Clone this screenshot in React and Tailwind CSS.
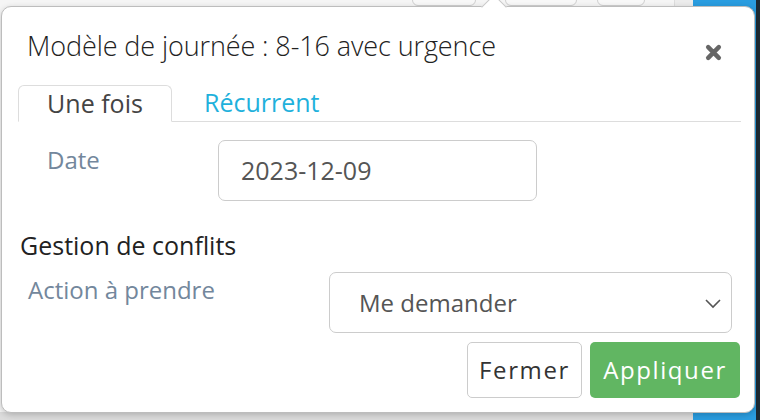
import React from "react";

const App = () => {
  return (
    <div
      className="relative w-[760px] h-[420px] overflow-hidden bg-[#f5f5f5]"
      style={{ fontFamily: "'Open Sans', 'Liberation Sans', sans-serif" }}
    >
      {/* Background page bits */}
      <div className="absolute left-[412px] top-[-10px] w-[64px] h-[16px] rounded-md border border-[#cfcfcf] bg-[#f8f8f8]" />
      <div className="absolute left-[505px] top-[-10px] w-[72px] h-[16px] rounded-md border border-[#cfcfcf] bg-[#f8f8f8]" />
      <div className="absolute left-[597px] top-[-10px] w-[48px] h-[16px] rounded-md border border-[#cfcfcf] bg-[#f8f8f8]" />
      <div className="absolute left-[674px] top-0 w-[20px] h-[420px] bg-[#ececec] border-l border-[#dddddd]" />
      <div className="absolute left-[693px] top-0 w-[67px] h-[420px] bg-[#2a9de0]" />
      <div className="absolute left-[756px] top-0 w-[4px] h-[420px] bg-[#1d2a33]" />
      <div className="absolute left-0 bottom-0 w-[693px] h-[8px] bg-[#dcdcdc]" />

      {/* Popover */}
      <div className="absolute left-[1px] top-[6px] w-[754px] h-[407px] bg-white rounded-[10px] border border-[#bdbdbd] shadow-[0_2px_6px_rgba(0,0,0,0.2)]">
        {/* Arrow */}
        <div className="absolute left-[483px] top-[-9px] w-[18px] h-[18px] bg-white rotate-45 border-l border-t border-[#c8c8c8]" />

        <div className="relative flex flex-col px-[16px]">
          {/* Header */}
          <div className="flex items-start justify-between pl-[9px] pr-[16px] pt-[21px] h-[77px]">
            <h2 className="text-[27px] leading-[36px] font-light text-[#222] tracking-[-0.1px]">
              Modèle de journée : 8-16 avec urgence
            </h2>
            <svg width="17" height="17" viewBox="0 0 16 16" className="mt-[16px]">
              <path d="M3 3 L13 13 M13 3 L3 13" stroke="#666" strokeWidth="4.2" strokeLinecap="round" />
            </svg>
          </div>

          {/* Tabs */}
          <div className="flex items-end border-b border-[#dddddd] w-[723px]">
            <div className="h-[37px] w-[154px] mb-[-1px] flex items-center justify-center bg-white border border-b-white border-[#dddddd] rounded-t-[6px] text-[25px] text-[#444]">
              Une fois
            </div>
            <div className="h-[37px] px-[32px] flex items-center text-[25px] text-[#1fb1dc]">
              Récurrent
            </div>
          </div>

          {/* Date row */}
          <div className="flex items-start mt-[18px]">
            <div className="w-[200px] pl-[29px] pt-[2px] text-[24px] text-[#73879c]">Date</div>
            <div className="w-[319px] h-[61px] flex items-center px-[22px] border border-[#cccccc] rounded-[7px] text-[25px] text-[#555]">
              2023-12-09
            </div>
          </div>

          {/* Conflicts */}
          <div className="mt-[27px] pl-[2px] text-[25px] leading-[34px] text-[#222]">Gestion de conflits</div>

          <div className="flex items-start mt-[10px]">
            <div className="w-[311px] pl-[10px] pt-0 text-[24px] text-[#73879c]">Action à prendre</div>
            <div className="w-[403px] h-[61px] flex items-center justify-between pl-[29px] pr-[9px] border border-[#cccccc] rounded-[7px] text-[24px] text-[#555]">
              <span>Me demander</span>
              <svg width="18" height="12" viewBox="0 0 18 12">
                <path d="M2 3 L9 10 L16 3" fill="none" stroke="#555" strokeWidth="1.6" />
              </svg>
            </div>
          </div>

          {/* Buttons */}
          <div className="flex justify-end gap-[8px] mt-[9px] mr-[-2px]">
            <button className="h-[56px] w-[115px] border border-[#cccccc] rounded-[5px] bg-white text-[24px] tracking-[1.6px] text-[#333]">
              Fermer
            </button>
            <button className="h-[56px] w-[150px] rounded-[5px] bg-[#61b662] text-[24px] tracking-[1.6px] text-white">
              Appliquer
            </button>
          </div>
        </div>
      </div>
    </div>
  );
};

export default App;
